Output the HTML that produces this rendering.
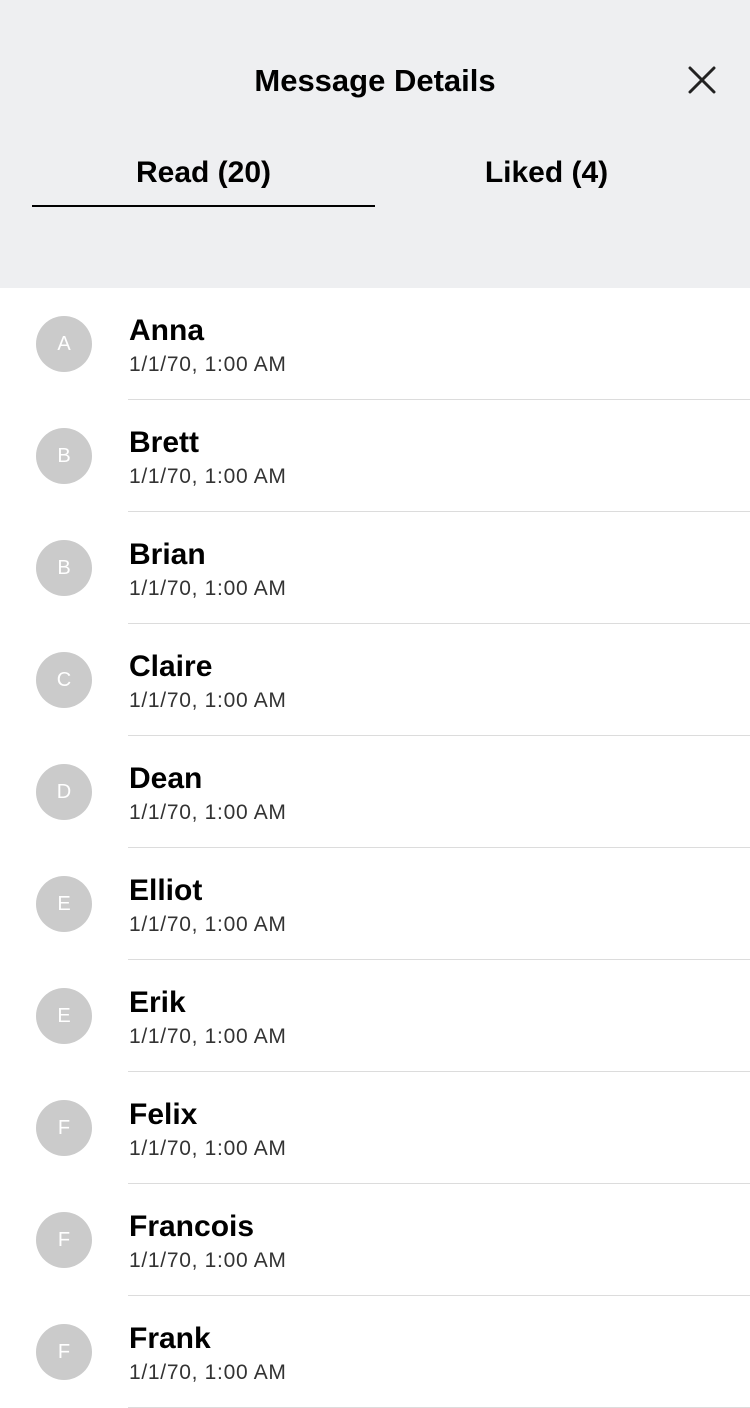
<!DOCTYPE html>
<html><head><style>
body{margin:0;width:750px;height:1334px;overflow:hidden;font-family:"Liberation Sans",sans-serif;background:#fff}
.hdr{position:absolute;left:0;top:0;width:750px;height:288px;background:#eeeff1}
.title{position:absolute;top:61px;left:0;width:750px;text-align:center;font-size:31px;font-weight:bold;color:#000;line-height:40px}
.tab{position:absolute;top:153px;font-size:30px;font-weight:bold;line-height:40px;color:#000;text-align:center;width:343px}
.ul{position:absolute;left:32px;top:205px;width:343px;height:2px;background:#000}
.row{position:absolute;left:0;width:750px;height:112px}
.av{position:absolute;left:36px;top:28px;width:56px;height:56px;border-radius:50%;background:#cbcbcb;color:#fff;font-size:20px;line-height:56px;text-align:center}
.nm{position:absolute;left:129px;top:25px;font-size:30px;line-height:36px;color:#000;font-weight:bold}
.dt{position:absolute;left:129px;top:63px;font-size:21px;line-height:28px;color:#333;letter-spacing:0.7px}
.sep{position:absolute;left:128px;right:0;bottom:0;height:1px;background:#dcdcdc}
</style></head><body>
<div class="hdr">
<div class="title">Message Details</div>
<svg style="position:absolute;left:688px;top:66px" width="28" height="28" viewBox="0 0 28 28"><path d="M2 2L26 26M26 2L2 26" stroke="#222" stroke-width="3" stroke-linecap="round"/></svg>
<div class="tab" style="left:32px">Read (20)</div>
<div class="tab" style="left:375px">Liked (4)</div>
<div class="ul"></div>
</div>
<div class="row" style="top:288px"><div class="av">A</div><div class="nm">Anna</div><div class="dt">1/1/70, 1:00 AM</div><div class="sep"></div></div>
<div class="row" style="top:400px"><div class="av">B</div><div class="nm">Brett</div><div class="dt">1/1/70, 1:00 AM</div><div class="sep"></div></div>
<div class="row" style="top:512px"><div class="av">B</div><div class="nm">Brian</div><div class="dt">1/1/70, 1:00 AM</div><div class="sep"></div></div>
<div class="row" style="top:624px"><div class="av">C</div><div class="nm">Claire</div><div class="dt">1/1/70, 1:00 AM</div><div class="sep"></div></div>
<div class="row" style="top:736px"><div class="av">D</div><div class="nm">Dean</div><div class="dt">1/1/70, 1:00 AM</div><div class="sep"></div></div>
<div class="row" style="top:848px"><div class="av">E</div><div class="nm">Elliot</div><div class="dt">1/1/70, 1:00 AM</div><div class="sep"></div></div>
<div class="row" style="top:960px"><div class="av">E</div><div class="nm">Erik</div><div class="dt">1/1/70, 1:00 AM</div><div class="sep"></div></div>
<div class="row" style="top:1072px"><div class="av">F</div><div class="nm">Felix</div><div class="dt">1/1/70, 1:00 AM</div><div class="sep"></div></div>
<div class="row" style="top:1184px"><div class="av">F</div><div class="nm">Francois</div><div class="dt">1/1/70, 1:00 AM</div><div class="sep"></div></div>
<div class="row" style="top:1296px"><div class="av">F</div><div class="nm">Frank</div><div class="dt">1/1/70, 1:00 AM</div><div class="sep"></div></div>
</body></html>
